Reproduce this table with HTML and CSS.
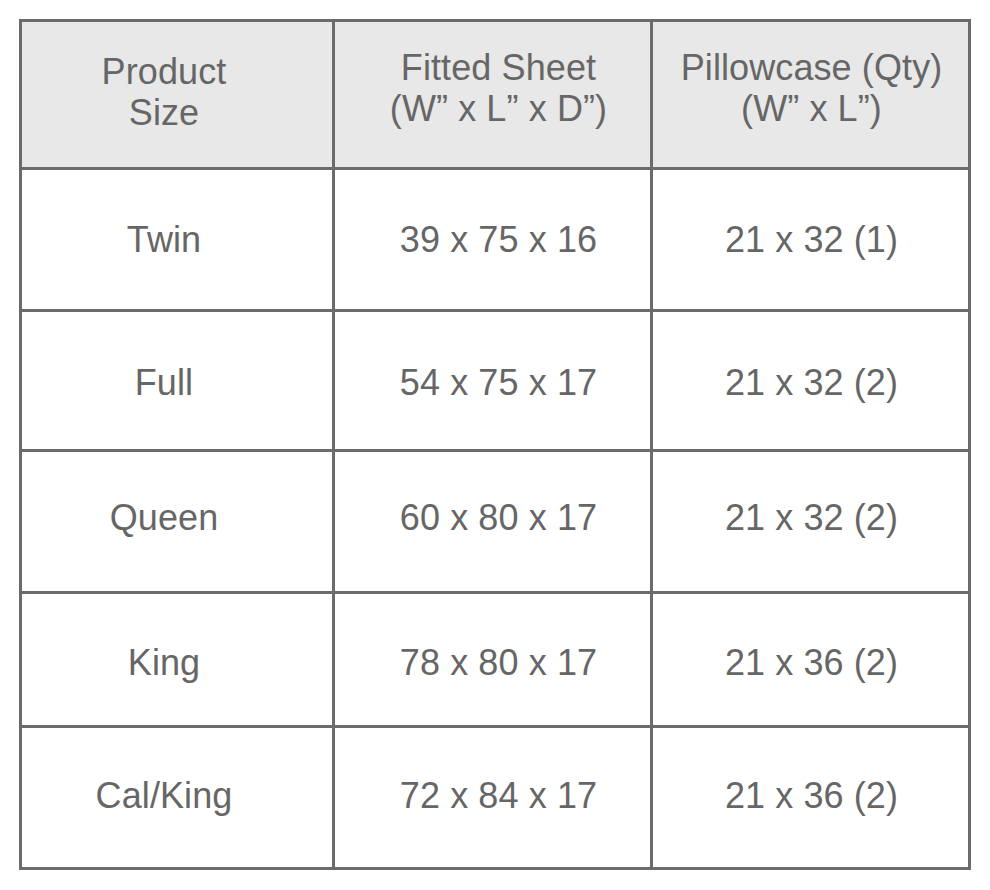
FILE: index.html
```html
<!DOCTYPE html>
<html>
<head>
<meta charset="utf-8">
<link rel="stylesheet" href="styles.css">
</head>
<body>
<div class="size-table">
  <div class="cell head c1"><span>Product<br>Size</span></div>
  <div class="cell head c2"><span>Fitted Sheet<br>(W” x L” x D”)</span></div>
  <div class="cell head c3"><span>Pillowcase (Qty)<br>(W” x L”)</span></div>

  <div class="cell c1">Twin</div>
  <div class="cell c2">39 x 75 x 16</div>
  <div class="cell c3">21 x 32 (1)</div>

  <div class="cell row-full c1">Full</div>
  <div class="cell row-full c2">54 x 75 x 17</div>
  <div class="cell row-full c3">21 x 32 (2)</div>

  <div class="cell row-queen c1">Queen</div>
  <div class="cell row-queen c2">60 x 80 x 17</div>
  <div class="cell row-queen c3">21 x 32 (2)</div>

  <div class="cell row-king c1">King</div>
  <div class="cell row-king c2">78 x 80 x 17</div>
  <div class="cell row-king c3">21 x 36 (2)</div>

  <div class="cell row-cal c1">Cal/King</div>
  <div class="cell row-cal c2">72 x 84 x 17</div>
  <div class="cell row-cal c3">21 x 36 (2)</div>
</div>
</body>
</html>
```
FILE: styles.css
```css
html, body {
  margin: 0;
  padding: 0;
  background: #ffffff;
}

body {
  padding: 19px 0 0 19px;
  font-family: "Liberation Sans", Arial, sans-serif;
}

.size-table {
  display: grid;
  width: 946px;
  grid-template-columns: 310px 315px 315px;
  grid-template-rows: 145px 139px 137px 139px 131px 139px;
  gap: 3px;
  padding: 3px;
  background: #6b6b6b;
}

.cell {
  background: #ffffff;
  color: #666666;
  font-size: 36px;
  line-height: 42px;
  letter-spacing: 0.1px;
  display: flex;
  align-items: center;
  justify-content: center;
  text-align: center;
}

.cell.head {
  background: #e8e8e8;
  line-height: 41px;
  padding-bottom: 14px;
}

.cell.head.c1 {
  padding-bottom: 6px;
}

.row-full {
  padding-top: 4px;
}

.row-queen {
  padding-bottom: 8px;
}

.row-king {
  padding-top: 6px;
}

.row-cal {
  padding-bottom: 4px;
}

.c1 {
  padding-right: 26px;
}

.c2 {
  padding-left: 12px;
}

.c3 {
  padding-left: 2px;
}
```
